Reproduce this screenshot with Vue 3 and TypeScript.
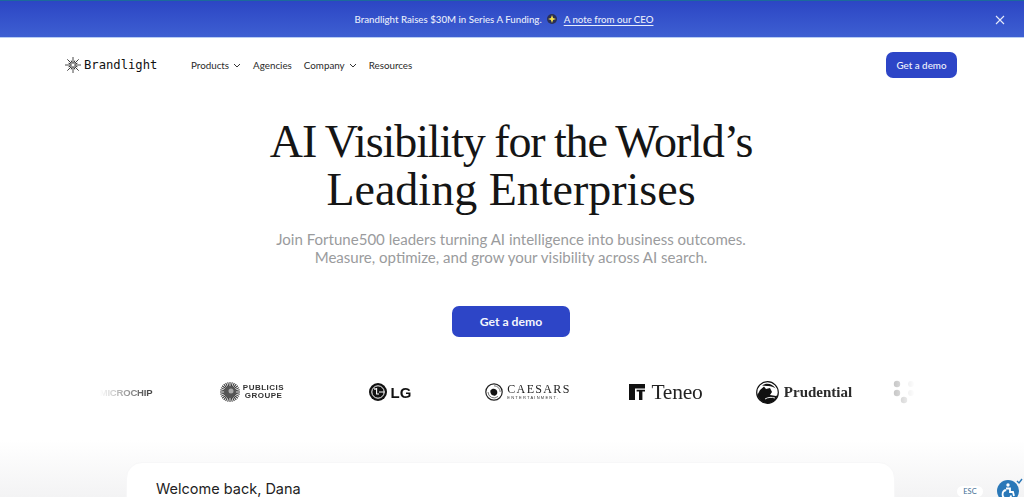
<script setup lang="ts">
interface NavItem { label: string; caret: boolean }
const navItems: NavItem[] = [
  { label: 'Products', caret: true },
  { label: 'Agencies', caret: false },
  { label: 'Company', caret: true },
  { label: 'Resources', caret: false },
]
const rays: number[] = [0, 45, 90, 135, 180, 225, 270, 315]
const shortRays: number[] = [22.5, 67.5, 112.5, 157.5, 202.5, 247.5, 292.5, 337.5]
const burst: number[] = Array.from({ length: 28 }, (_, i) => i * (360 / 28))
</script>

<template>
  <div class="page">
    <div class="banner">
      <span class="banner-title">Brandlight Raises $30M in Series A Funding.</span>
      <svg class="sparkle" width="12" height="12" viewBox="0 0 12 12" aria-hidden="true">
        <circle cx="6" cy="6" r="5" fill="#2a2f55" />
        <path d="M6 2 7.1 4.9 10 6 7.1 7.1 6 10 4.9 7.1 2 6 4.9 4.9Z" fill="#f4e04d" />
      </svg>
      <a class="banner-link">A note from our CEO</a>
      <svg class="close" width="10" height="10" viewBox="0 0 10 10" aria-hidden="true">
        <path d="M1 1 9 9M9 1 1 9" stroke="#e6ebfa" stroke-width="1.1" fill="none" />
      </svg>
    </div>

    <header class="nav">
      <div class="brand">
        <svg width="16" height="16" viewBox="-8 -8 16 16" aria-hidden="true">
          <g stroke="#1a1a1a" stroke-width="0.8" fill="none">
            <path v-for="r in rays" :key="r" d="M0 -2.2V-8" :transform="`rotate(${r})`" />
            <path v-for="r in shortRays" :key="r" d="M0 -1.6V-4.8" :transform="`rotate(${r})`" />
          </g>
        </svg>
        <span class="brand-name">Brandlight</span>
      </div>
      <nav class="links">
        <a v-for="item in navItems" :key="item.label" class="link">
          {{ item.label }}
          <svg v-if="item.caret" width="8" height="5" viewBox="0 0 8 5" aria-hidden="true">
            <path d="M1 1 4 4 7 1" stroke="#333" stroke-width="1" fill="none" />
          </svg>
        </a>
      </nav>
      <button class="nav-cta">Get a demo</button>
    </header>

    <main class="hero">
      <h1><span class="line-one">AI Visibility for the World’s</span><br />Leading Enterprises</h1>
      <p>Join Fortune500 leaders turning AI intelligence into business outcomes.<br />Measure, optimize, and grow your visibility across AI search.</p>
      <button class="hero-cta">Get a demo</button>
    </main>

    <section class="strip">
      <div class="track">
        <div class="logo logo-micro"><span class="microchip">MICROCHIP</span></div>
        <div class="logo">
          <svg width="20" height="20" viewBox="-10 -10 20 20" aria-hidden="true">
            <g stroke="#333" stroke-width="1">
              <path v-for="r in burst" :key="r" d="M0 -5V-10" :transform="`rotate(${r})`" />
            </g>
            <circle r="6" fill="#555" />
            <circle cx="1" cy="-1" r="2.5" fill="#aaa" />
          </svg>
          <span class="publicis">PUBLICIS<br />GROUPE</span>
        </div>
        <div class="logo">
          <svg width="18" height="18" viewBox="0 0 18 18" aria-hidden="true">
            <circle cx="9" cy="9" r="9" fill="#111" />
            <circle cx="9" cy="9" r="6.2" fill="none" stroke="#fff" stroke-width="1" />
            <path d="M7.6 5V11H10" stroke="#fff" stroke-width="1.1" fill="none" />
            <path d="M10 9H15.5" stroke="#fff" stroke-width="1" fill="none" />
            <circle cx="6" cy="6" r="0.9" fill="#fff" />
          </svg>
          <span class="lg">LG</span>
        </div>
        <div class="logo">
          <svg width="18" height="18" viewBox="0 0 18 18" aria-hidden="true">
            <circle cx="9" cy="9" r="8.2" fill="none" stroke="#222" stroke-width="1.2" />
            <path d="M9 2.8A6.2 6.2 0 0 1 15.2 9" fill="none" stroke="#555" stroke-width="0.8" />
            <path d="M3 9A6 6 0 0 0 13 13.4" fill="none" stroke="#555" stroke-width="0.8" />
            <path d="M5.4 7.6C7 4.8 11.4 5.2 12.2 8.4 12.8 11 10.8 13 8.4 12.6 6.4 12.4 5 9.8 5.4 7.6Z" fill="#111" />
          </svg>
          <div class="caesars">
            <span class="caesars-top">CAESARS</span>
            <span class="caesars-sub">ENTERTAINMENT.</span>
          </div>
        </div>
        <div class="logo">
          <svg width="16" height="16" viewBox="0 0 16 16" aria-hidden="true">
            <path d="M0 0H16V4.4H0Z M0 4.4H6V16H0Z M7.6 5.8H16V7.4H13.4V16H10V7.4H7.6Z" fill="#111" />
          </svg>
          <span class="teneo">Teneo</span>
        </div>
        <div class="logo">
          <svg width="23" height="23" viewBox="0 0 23 23" aria-hidden="true">
            <circle cx="11.5" cy="11.5" r="10.8" fill="#fff" stroke="#111" stroke-width="1.2" />
            <path d="M1.4 14 4 9 8 5.6 10 8 14 7 16 11 14 14 20 15 21.6 14C20 20 15 22.3 11.5 22.3 7 22.3 3 19 1.4 14Z" fill="#111" />
            <path d="M6 4.5C10.5 1.4 16.5 2.6 19.6 7.6 17.5 5.6 14 4.6 11 5" fill="#111" />
            <path d="M9 18C12 16 16 16 19 17" fill="none" stroke="#fff" stroke-width="0.9" />
          </svg>
          <span class="prudential">Prudential</span>
        </div>
        <div class="logo logo-dots">
          <svg width="22" height="24" viewBox="0 0 22 24" aria-hidden="true">
            <g fill="#707070">
              <circle cx="4" cy="4" r="3.2" />
              <circle cx="4" cy="13" r="3.2" />
              <circle cx="11" cy="20" r="3.2" />
            </g>
            <g fill="#a8a8a8">
              <circle cx="18" cy="4" r="3" />
              <circle cx="18" cy="13" r="3" />
            </g>
          </svg>
        </div>
      </div>
    </section>

    <section class="preview">
      <div class="card">Welcome back, Dana</div>
    </section>

    <div class="esc">ESC</div>
    <svg class="a11y" width="26" height="26" viewBox="0 0 26 26" aria-hidden="true">
      <circle cx="11" cy="14" r="11" fill="#2a78b8" />
      <circle cx="11" cy="8" r="1.7" fill="#fff" />
      <path d="M9 11.5 13 11.5 13 15 16 15 17 19M9.2 13a4.4 4.4 0 1 0 5 5.6" fill="none" stroke="#fff" stroke-width="1.8" />
      <path d="M20 4 22 6 25 2" fill="none" stroke="#2a78b8" stroke-width="1.4" />
    </svg>
  </div>
</template>

<style>
html, body { margin: 0; background: #fff; }
</style>

<style scoped>
.page {
  position: relative;
  width: 1024px;
  height: 497px;
  overflow: hidden;
  display: flex;
  flex-direction: column;
  background: linear-gradient(180deg, #fff 0, #fff 440px, #f3f3f4 497px);
  font-family: Lato, "Liberation Sans", sans-serif;
  color: #1a1a1a;
}
.banner {
  position: relative;
  height: 38px;
  flex: none;
  display: flex;
  align-items: center;
  justify-content: center;
  padding-right: 16px;
  box-sizing: border-box;
  background: linear-gradient(180deg, #2c46c4 0, #3e5fd2 100%);
  border-top: 1px solid #1b6a9c;
  border-bottom: 1px solid #b7cdf3;
  color: #e8edfb;
  font-size: 9.7px;
  font-weight: 500;
}
.sparkle { margin: 0 6px 0 4px; }
.banner-link { text-decoration: underline; text-underline-offset: 2px; }
.close { position: absolute; right: 19px; top: 14px; }
.nav {
  flex: none;
  height: 54px;
  display: flex;
  align-items: center;
  padding: 0 67px 0 65px;
}
.brand { display: flex; align-items: center; gap: 3px; width: 126px; flex: none; }
.brand-name {
  font-family: "DejaVu Sans Mono", monospace;
  font-size: 12.2px;
  color: #111;
}
.links { display: flex; align-items: center; gap: 12px; }
.link {
  display: flex;
  align-items: center;
  gap: 4px;
  font-size: 9.8px;
  color: #2a2a2a;
}
.nav-cta {
  margin-left: auto;
  width: 71px;
  height: 26px;
  border: 0;
  border-radius: 7px;
  background: #2d45c7;
  color: #f1f3fc;
  font: 500 9.8px Lato, sans-serif;
  padding: 0;
}
.hero {
  flex: none;
  display: flex;
  flex-direction: column;
  align-items: center;
  text-align: center;
  padding-right: 2px;
  padding-top: 26px;
}
h1 {
  margin: 0;
  font-family: "Liberation Serif", serif;
  font-weight: 400;
  font-size: 46px;
  line-height: 48px;
  color: #151515;
}
.line-one { letter-spacing: -1.1px; word-spacing: -1px; }
p {
  margin: 16px 0 0;
  font-size: 15.05px;
  line-height: 18px;
  color: #9a9b9d;
}
.hero-cta {
  margin-top: 40px;
  width: 118px;
  height: 31px;
  border: 0;
  border-radius: 7px;
  background: #2d45c7;
  color: #f4f6fd;
  font: 700 12.2px Lato, sans-serif;
  padding: 0;
}
.strip {
  flex: none;
  margin: 37px 0 0 100px;
  width: 816px;
  height: 36px;
  overflow: hidden;
  filter: blur(0.35px);
  -webkit-mask-image: linear-gradient(90deg, transparent 0, #000 50px, #000 760px, transparent 100%);
  mask-image: linear-gradient(90deg, transparent 0, #000 50px, #000 760px, transparent 100%);
}
.track {
  margin-left: -55px;
  height: 100%;
  display: grid;
  grid-auto-flow: column;
  grid-auto-columns: 138px;
  align-items: center;
}
.logo {
  display: flex;
  align-items: center;
  justify-content: center;
  gap: 3px;
}
.logo-micro { padding-left: 24px; }
.microchip { font: 700 9.5px "Liberation Sans", sans-serif; color: #444; letter-spacing: -0.2px; }
.publicis {
  font: 700 8px/8px "Liberation Sans", sans-serif;
  letter-spacing: 0.5px;
  color: #333;
  text-align: center;
}
.lg { font: 700 15px "Liberation Sans", sans-serif; color: #111; margin-left: 1px; }
.caesars { display: flex; flex-direction: column; align-items: flex-start; margin-left: 1px; }
.caesars-top { font: 400 12px/11px "Liberation Serif", serif; letter-spacing: 1.35px; color: #222; }
.caesars-sub { font: 400 4px/5px "Liberation Sans", sans-serif; letter-spacing: 1.25px; color: #333; }
.teneo { font: 400 21.5px "Liberation Serif", serif; color: #222; margin-left: 3px; letter-spacing: -0.2px; }
.prudential { font: 700 15px "Liberation Serif", serif; color: #2b2b2b; margin-left: 2px; }
.logo-dots { justify-content: flex-start; padding-left: 20px; }
.preview {
  flex: none;
  margin: 52px 129px 0 126px;
}
.card {
  height: 80px;
  box-sizing: border-box;
  background: #fff;
  border: 1px solid #f7f7f8;
  border-radius: 16px;
  padding: 16px 29px;
  font: 400 14.5px/20px Inter, sans-serif;
  color: #222;
}
.esc {
  position: absolute;
  left: 957px;
  top: 486px;
  width: 26px;
  height: 11px;
  background: #fff;
  border-radius: 6px;
  font: 400 7.5px/11px Lato, sans-serif;
  text-align: center;
  color: #3f6d93;
}
.a11y { position: absolute; left: 997px; top: 477px; }
</style>
